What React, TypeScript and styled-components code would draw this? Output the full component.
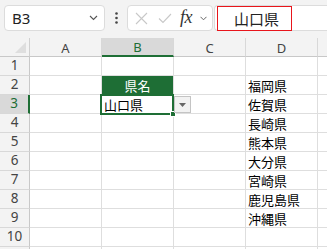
import styled, { createGlobalStyle } from "styled-components";

const GlobalStyle = createGlobalStyle`
  html, body {
    margin: 0;
    padding: 0;
    background: #ffffff;
  }
  body {
    font-family: "Noto Sans", "Noto Sans CJK JP", sans-serif;
    overflow: hidden;
  }
`;

const GREEN = "#1e6e35";
const CJK = `"Noto Sans CJK JP", "Noto Sans", sans-serif`;

const Frame = styled.div`
  width: 100vw;
  height: 100vh;
  overflow: hidden;
`;

const Toolbar = styled.div`
  height: 38px;
  box-sizing: border-box;
  padding: 5px 0 0 4px;
  background: #f3f3f3;
  display: flex;
  align-items: flex-start;
`;

const NameBox = styled.div`
  width: 101px;
  height: 26px;
  box-sizing: border-box;
  background: #fff;
  border: 1px solid #dcdcdc;
  border-radius: 4px;
  display: flex;
  align-items: center;
  justify-content: space-between;
  padding: 0 6px 0 7px;
  font-family: "Noto Sans", sans-serif;
  font-size: 15px;
  color: #222;
`;

const Dots = styled.div`
  width: 22px;
  height: 26px;
  display: flex;
  align-items: center;
  justify-content: center;
`;

const FxBox = styled.div`
  width: 86px;
  height: 26px;
  box-sizing: border-box;
  background: #fff;
  border: 1px solid #dcdcdc;
  border-radius: 4px;
  display: flex;
  align-items: center;
  padding-left: 5px;
`;

const IconSlot = styled.div<{ $w: number }>`
  width: ${(p) => p.$w}px;
  height: 24px;
  display: flex;
  align-items: center;
  justify-content: center;
`;

const Fx = styled.span`
  font-family: "Liberation Serif", serif;
  font-style: italic;
  font-size: 18px;
  color: #333;
  letter-spacing: -0.5px;
  margin-top: -2px;
`;

const FormulaInput = styled.div`
  flex: 1;
  height: 26px;
  box-sizing: border-box;
  margin-left: 1px;
  background: #fff;
  border: 1px solid #dcdcdc;
  border-right: none;
  border-radius: 4px 0 0 4px;
  display: flex;
  align-items: center;
  padding-left: 2px;
`;

const Highlight = styled.div`
  width: 75px;
  height: 25px;
  box-sizing: border-box;
  border: 1px solid #e8151b;
  display: flex;
  align-items: center;
  padding-left: 16px;
  font-family: ${CJK};
  font-size: 15px;
  color: #222;
`;

const Sheet = styled.div`
  position: relative;
  display: grid;
  grid-template-columns: 30px repeat(5, 72px);
  grid-auto-rows: 19px;
`;

const Corner = styled.div`
  background: #f3f3f3;
  border-right: 1px solid #d0d0d0;
  border-bottom: 1px solid #c8c8c8;
  box-sizing: border-box;
  position: relative;
  &::after {
    content: "";
    position: absolute;
    right: 3px;
    bottom: 3px;
    width: 0;
    height: 0;
    border-left: 11px solid transparent;
    border-bottom: 11px solid #dedede;
  }
`;

const ColHead = styled.div<{ $active?: boolean }>`
  box-sizing: border-box;
  background: ${(p) => (p.$active ? "#d9d9d9" : "#f3f3f3")};
  border-right: 1px solid #d8d8d8;
  border-bottom: ${(p) => (p.$active ? `2px solid ${GREEN}` : "1px solid #c8c8c8")};
  display: flex;
  align-items: center;
  justify-content: center;
  font-family: "Noto Sans", sans-serif;
  font-size: 13px;
  color: ${(p) => (p.$active ? GREEN : "#444")};
  padding-top: 1px;
`;

const RowHead = styled.div<{ $active?: boolean }>`
  box-sizing: border-box;
  background: ${(p) => (p.$active ? "#d9d9d9" : "#f3f3f3")};
  border-right: ${(p) => (p.$active ? `2px solid ${GREEN}` : "1px solid #c8c8c8")};
  border-bottom: 1px solid #d8d8d8;
  display: flex;
  align-items: center;
  justify-content: center;
  font-family: "Noto Sans", sans-serif;
  font-size: 13.5px;
  line-height: 1;
  color: ${(p) => (p.$active ? GREEN : "#444")};
`;

const Cell = styled.div<{ $title?: boolean }>`
  box-sizing: border-box;
  border-right: 1px solid #dedede;
  border-bottom: 1px solid #dedede;
  background: ${(p) => (p.$title ? GREEN : "#fff")};
  color: ${(p) => (p.$title ? "#fff" : "#000")};
  display: flex;
  align-items: center;
  justify-content: ${(p) => (p.$title ? "center" : "flex-start")};
  padding-left: ${(p) => (p.$title ? 0 : 2)}px;
  font-family: ${CJK};
  font-size: 13px;
  line-height: 1;
  white-space: nowrap;
  overflow: hidden;
`;

const Selection = styled.div`
  position: absolute;
  left: 100px;
  top: 56px;
  width: 74px;
  height: 21px;
  box-sizing: border-box;
  border: 2px solid ${GREEN};
  pointer-events: none;
`;

const FillHandle = styled.div`
  position: absolute;
  left: 170px;
  top: 73px;
  width: 6px;
  height: 6px;
  box-sizing: border-box;
  background: ${GREEN};
  border: 1px solid #fff;
`;

const DropButton = styled.div`
  position: absolute;
  left: 174px;
  top: 58px;
  width: 17px;
  height: 17px;
  box-sizing: border-box;
  background: #f2f2f2;
  border: 1px solid #c4c4c4;
  display: flex;
  align-items: center;
  justify-content: center;
`;

const Chevron = () => (
  <svg width="9" height="6" viewBox="0 0 9 6">
    <path d="M1 1 L4.5 4.5 L8 1" fill="none" stroke="#555" strokeWidth="1.1" />
  </svg>
);

const columns = ["A", "B", "C", "D", "E"];

const rows: Record<number, { B?: string; D?: string }> = {
  2: { B: "県名", D: "福岡県" },
  3: { B: "山口県", D: "佐賀県" },
  4: { D: "長崎県" },
  5: { D: "熊本県" },
  6: { D: "大分県" },
  7: { D: "宮崎県" },
  8: { D: "鹿児島県" },
  9: { D: "沖縄県" },
};

export default function App() {
  return (
    <Frame>
      <GlobalStyle />
      <Toolbar>
        <NameBox>
          <span>B3</span>
          <Chevron />
        </NameBox>
        <Dots>
          <svg width="3" height="12" viewBox="0 0 3 12">
            <circle cx="1.5" cy="1.5" r="1.3" fill="#444" />
            <circle cx="1.5" cy="6" r="1.3" fill="#444" />
            <circle cx="1.5" cy="10.5" r="1.3" fill="#444" />
          </svg>
        </Dots>
        <FxBox>
          <IconSlot $w={16}>
            <svg width="13" height="13" viewBox="0 0 13 13">
              <path d="M1 1 L12 12 M12 1 L1 12" stroke="#c8c8c8" strokeWidth="1.1" />
            </svg>
          </IconSlot>
          <IconSlot $w={8} />
          <IconSlot $w={16}>
            <svg width="14" height="11" viewBox="0 0 14 11">
              <path d="M1 5.5 L5 9.5 L13 1" fill="none" stroke="#c8c8c8" strokeWidth="1.1" />
            </svg>
          </IconSlot>
          <IconSlot $w={26}>
            <Fx>fx</Fx>
          </IconSlot>
          <IconSlot $w={8}>
            <svg width="7" height="5" viewBox="0 0 7 5">
              <path d="M0.5 0.8 L3.5 3.8 L6.5 0.8" fill="none" stroke="#666" strokeWidth="1" />
            </svg>
          </IconSlot>
        </FxBox>
        <FormulaInput>
          <Highlight>山口県</Highlight>
        </FormulaInput>
      </Toolbar>
      <Sheet>
        <Corner />
        {columns.map((c) => (
          <ColHead key={c} $active={c === "B"}>
            {c}
          </ColHead>
        ))}
        {Array.from({ length: 11 }, (_, i) => i + 1).flatMap((r) => {
          const data = rows[r] ?? {};
          return [
            <RowHead key={`h${r}`} $active={r === 3}>
              {r}
            </RowHead>,
            ...columns.map((c) => (
              <Cell key={`${c}${r}`} $title={r === 2 && c === "B"}>
                {c === "B" ? data.B : c === "D" ? data.D : null}
              </Cell>
            )),
          ];
        })}
        <Selection />
        <FillHandle />
        <DropButton>
          <svg width="7" height="4" viewBox="0 0 7 4">
            <path d="M0 0 L7 0 L3.5 4 Z" fill="#666" />
          </svg>
        </DropButton>
      </Sheet>
    </Frame>
  );
}
